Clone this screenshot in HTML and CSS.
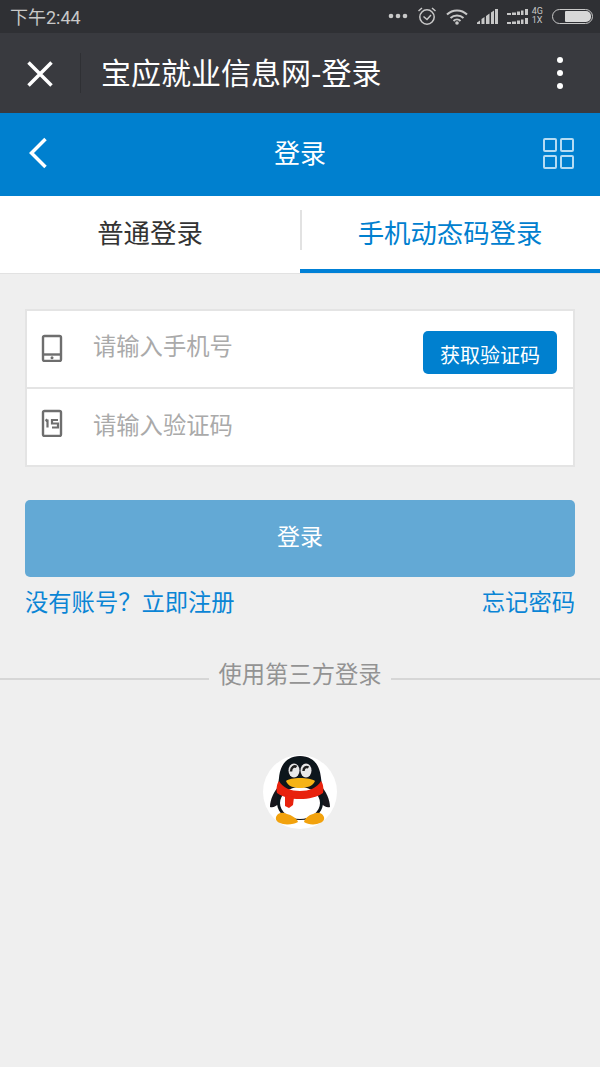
FILE: index.html
```html
<!DOCTYPE html>
<html lang="zh-CN">
<head>
    <meta charset="UTF-8">
    <meta name="viewport" content="width=device-width, initial-scale=1.0">
    <title>宝应就业信息网-登录</title>
    <link rel="stylesheet" href="styles.css">
</head>
<body>
    <div class="status-bar">
        <span class="status-time">下午2:44</span>
        <div class="status-icons">
            <svg width="20" height="8" viewBox="0 0 20 8"><circle cx="3" cy="4" r="2.300"/><circle cx="10" cy="4" r="2.300"/><circle cx="17" cy="4" r="2.300"/></svg>
            <svg class="stroke-icon" width="20" height="20" viewBox="0 0 20 20"><circle cx="10" cy="11" r="7.200"/><path d="M6.500 10.500l3.500 3 4-4.500M1.500 5l3.500-3M18.500 5l-3.500-3"/></svg>
            <svg width="22" height="17" viewBox="0 0 22 17"><path class="wifi-line" d="M1 6.500c5.500-5.500 14.500-5.500 20 0M4.500 10c3.500-3.500 9.500-3.500 13 0M7.500 13c2-2 5-2 7 0"/><circle cx="11" cy="15" r="1.800"/></svg>
            <svg width="21" height="15" viewBox="0 0 21 15"><path d="M0 15v-1.500l3-2v3.500zM4.500 15v-5l3-2v7zM9 15v-8l3.500-2.500v10.500zM14 15v-11.500l3-2v13.500zM18 15v-15h3v15z"/></svg>
            <svg width="21" height="15" viewBox="0 0 21 15"><path d="M0 4h4v2h-4zM5 3.500h4v2.500h-4zM10 2.500h3v3.500h-3zM14 1.500h2.500v4.500h-2.500zM18 0h3v6h-3zM0 13h4v2h-4zM5 12.500h4v2.500h-4zM10 11.500h3v3.500h-3zM14 10.500h2.500v4.500h-2.500zM18 9h3v6h-3z"/></svg>
            <span class="net-type">4G<br>1X</span>
            <span class="battery"><span class="battery-level"></span></span>
        </div>
    </div>

    <div class="wx-bar">
        <svg class="wx-close" width="28" height="28" viewBox="0 0 28 28"><path d="M2.500 2.500l23 23M25.500 2.500l-23 23"/></svg>
        <span class="wx-divider"></span>
        <span class="wx-title">宝应就业信息网-登录</span>
        <div class="wx-more"><i></i><i></i><i></i></div>
    </div>

    <div class="page-header">
        <svg class="back-icon" width="20" height="32" viewBox="0 0 20 32"><path d="M17.500 2l-14 14 14 14"/></svg>
        <span class="page-title">登录</span>
        <svg class="grid-icon" width="31" height="31" viewBox="0 0 31 31">
            <rect x="1" y="1" width="12" height="12" rx="1"/><rect x="18" y="1" width="12" height="12" rx="1"/>
            <rect x="1" y="18" width="12" height="12" rx="1"/><rect x="18" y="18" width="12" height="12" rx="1"/>
        </svg>
    </div>

    <div class="tabs">
        <div class="tab">普通登录</div>
        <div class="tab active">手机动态码登录</div>
    </div>

    <div class="form-box">
        <div class="form-row">
            <svg class="field-icon" width="22" height="28" viewBox="0 0 22 28"><rect x="2" y="2" width="18" height="25" rx="1.500"/><path d="M2 20.500h18"/><circle class="dot" cx="11" cy="23.700" r="1.500"/></svg>
            <span class="placeholder">请输入手机号</span>
            <button class="code-btn">获取验证码</button>
        </div>
        <div class="form-row">
            <svg class="field-icon" width="22" height="28" viewBox="0 0 22 28"><rect x="2" y="2" width="18" height="25" rx="1.500"/><path class="digits" d="M6.500 10.500v8M4.500 12l2-1.500M17 11h-6v3.500h6v4h-6"/></svg>
            <span class="placeholder">请输入验证码</span>
        </div>
    </div>

    <button class="login-btn">登录</button>

    <div class="links">
        <a>没有账号？立即注册</a>
        <a>忘记密码</a>
    </div>

    <div class="third-title">使用第三方登录</div>

    <div class="qq-login">
        <svg width="74" height="74" viewBox="0 0 74 74">
            <defs><filter id="soft"><feGaussianBlur stdDeviation="0.500"/></filter></defs>
            <circle cx="37" cy="37" r="37" fill="#fff"/>
            <g filter="url(#soft)">
                <path d="M16 31c-5 5-9 14-9 21 3 1 7-1 9-4zM58 31c5 5 9 14 9 21-3 1-7-1-9-4z" fill="#15171c"/>
                <path d="M37 1c-13 0-20 9-21 22-1 9-3 17-2 26 1 9 8 16 23 16s22-7 23-16c1-9-1-17-2-26-1-13-8-22-21-22z" fill="#11131a"/>
                <ellipse cx="37" cy="48" rx="20" ry="16" fill="#fff"/>
                <ellipse cx="31" cy="15.500" rx="5.500" ry="7" fill="#e8e8e8"/>
                <ellipse cx="43" cy="15.500" rx="5.500" ry="7" fill="#e8e8e8"/>
                <path d="M33.500 12c-2-1.500-5.500 0-5.500 4.500M40.500 16c0-3 2.500-5 5-3.500" fill="none" stroke="#222" stroke-width="2.500"/>
                <path d="M16 26c4 7 12 10 21 10s17-3 21-10c2 2 3 8 2 12-6 4-14 6-23 6s-17-2-23-6c-1-4 0-10 2-12z" fill="#e8200e"/>
                <path d="M22 40l9 2-1 8-4 3-4-2z" fill="#e8200e"/>
                <path d="M23 26c4-4 24-4 29 0-2 5-8 7-15 7s-12-2-14-7z" fill="#f5b318"/>
                <path d="M13 62c2-5 7-5 11-3 4 1 10 4 11 8-3 2-10 3-15 2-4-1-8-3-7-7zM61 62c-2-5-7-5-11-3-4 1-8 4-9 8 3 2 8 3 13 2 4-1 8-3 7-7z" fill="#f2a20f"/>
            </g>
        </svg>
    </div>
</body>
</html>
```

FILE: styles.css
```css
* {
    box-sizing: border-box;
}
html, body {
    margin: 0;
    padding: 0;
}
body {
    width: 600px;
    height: 1067px;
    overflow: hidden;
    background: #efefef;
    font-family: "Noto Sans CJK SC", "Roboto", sans-serif;
}

/* status bar */
.status-bar {
    height: 33px;
    background: #2f3034;
    display: flex;
    align-items: center;
    justify-content: space-between;
    padding: 0 7px 0 10px;
}
.status-time {
    color: #c8c8c8;
    font-size: 18px;
    font-family: "Roboto", "Noto Sans CJK SC", sans-serif;
    padding-bottom: 2px;
}
.status-icons {
    display: flex;
    align-items: center;
    gap: 9px;
    margin-bottom: 1px;
}
.status-icons svg {
    fill: #c8c8c8;
}
.status-icons .stroke-icon {
    fill: none;
    stroke: #c8c8c8;
    stroke-width: 1.500;
}
.wifi-line {
    fill: none;
    stroke: #c8c8c8;
    stroke-width: 2;
}
.net-type {
    color: #c8c8c8;
    font-family: "Roboto", sans-serif;
    font-size: 9px;
    line-height: 9px;
    margin-left: -5px;
}
.battery {
    width: 41px;
    height: 15px;
    border: 1.500px solid #c8c8c8;
    border-radius: 8px;
    display: flex;
    justify-content: flex-end;
    padding: 1px;
}
.battery-level {
    width: 26px;
    background: #d8d8d8;
    border-radius: 1px 5px 5px 1px;
}

/* wechat title bar */
.wx-bar {
    height: 80px;
    background: #393a3f;
    display: flex;
    align-items: center;
    padding-left: 26px;
    padding-right: 37px;
}
.wx-close {
    fill: none;
    stroke: #fff;
    stroke-width: 3.500;
    margin-top: 2px;
}
.wx-divider {
    width: 1px;
    height: 40px;
    background: #2f3034;
    margin-left: 26px;
    margin-right: 20px;
}
.wx-title {
    color: #fff;
    font-size: 30px;
    flex: 1;
    padding-bottom: 4px;
}
.wx-more {
    display: flex;
    flex-direction: column;
    gap: 7px;
}
.wx-more i {
    display: block;
    width: 6px;
    height: 6px;
    border-radius: 50%;
    background: #fff;
}

/* page header */
.page-header {
    height: 83px;
    background: #0080cf;
    display: flex;
    align-items: center;
    padding: 0 26px 3px 28px;
}
.back-icon {
    fill: none;
    stroke: #fff;
    stroke-width: 3.500;
    margin-right: 9px;
}
.page-title {
    flex: 1;
    text-align: center;
    color: #fff;
    font-size: 26px;
    padding-bottom: 4px;
}
.grid-icon {
    fill: none;
    stroke: #b5dcf3;
    stroke-width: 2;
}

/* tabs */
.tabs {
    height: 78px;
    background: #fff;
    display: flex;
    border-bottom: 1px solid #e2e2e2;
}
.tab {
    flex: 1;
    height: 77px;
    display: flex;
    align-items: center;
    justify-content: center;
    color: #333;
    font-size: 26.400px;
    padding-bottom: 6px;
}
.tab.active {
    color: #0080cf;
    border-bottom: 4px solid #0080d6;
    padding-bottom: 2px;
    position: relative;
}
.tab.active::before {
    content: "";
    position: absolute;
    left: 0;
    top: 14px;
    width: 2px;
    height: 40px;
    background: #e2e2e2;
}

/* form */
.form-box {
    margin: 35px 25px 0;
    background: #fff;
    border: 2px solid #e4e4e4;
}
.form-row {
    height: 76px;
    display: flex;
    align-items: flex-start;
    padding: 19px 16px 0 14px;
}
.form-row + .form-row {
    border-top: 2px solid #e4e4e4;
    height: 78px;
    padding-top: 20px;
}
.field-icon {
    fill: none;
    stroke: #6e6e6e;
    stroke-width: 2.400;
    margin-top: 4px;
}
.form-row + .form-row .field-icon {
    margin-top: 0;
}
.field-icon .dot {
    fill: #6e6e6e;
    stroke: none;
}
.field-icon .digits {
    stroke-width: 2.200;
}
.placeholder {
    color: #aaa;
    font-size: 23.300px;
    line-height: 30px;
    margin-left: 30px;
    flex: 1;
}
.code-btn {
    width: 134px;
    height: 43px;
    margin-top: 1px;
    padding: 4px 0 0;
    border: none;
    border-radius: 5px;
    background: #0080cf;
    color: #fff;
    font-family: inherit;
    font-size: 20px;
}
.login-btn {
    display: block;
    width: 550px;
    height: 77px;
    margin: 33px 25px 0;
    padding: 0 0 8px;
    border: none;
    border-radius: 5px;
    background: #63a9d5;
    color: #fff;
    font-family: inherit;
    font-size: 23px;
}

/* links */
.links {
    display: flex;
    justify-content: space-between;
    padding: 0 25px;
    margin-top: 6px;
    color: #0a85d5;
    font-size: 23.300px;
    line-height: 36px;
}

/* third party */
.third-title {
    display: flex;
    align-items: center;
    gap: 9px;
    margin-top: 37px;
    color: #939393;
    font-size: 23.300px;
    line-height: 34px;
}
.third-title::before,
.third-title::after {
    content: "";
    flex: 1;
    height: 2px;
    background: #d6d6d6;
    margin-top: 12px;
}
.qq-login {
    display: flex;
    justify-content: center;
    margin-top: 65px;
}
```
